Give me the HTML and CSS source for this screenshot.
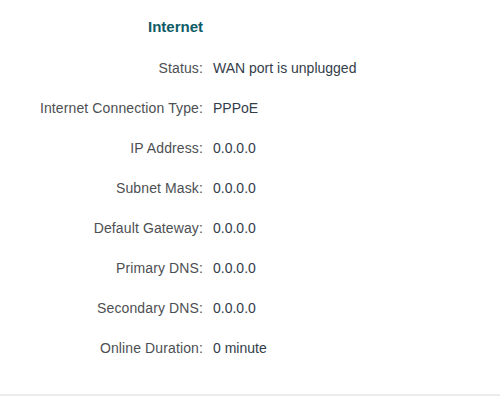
FILE: index.html
```html
<!DOCTYPE html>
<html>
<head>
<meta charset="utf-8">
<link rel="stylesheet" href="styles.css">
</head>
<body>
<div class="panel">
  <div class="title-row">
    <div class="title">Internet</div>
  </div>
  <div class="grid">
    <div class="label">Status:</div><div class="value">WAN port is unplugged</div>
    <div class="label">Internet Connection Type:</div><div class="value">PPPoE</div>
    <div class="label">IP Address:</div><div class="value">0.0.0.0</div>
    <div class="label">Subnet Mask:</div><div class="value">0.0.0.0</div>
    <div class="label">Default Gateway:</div><div class="value">0.0.0.0</div>
    <div class="label">Primary DNS:</div><div class="value">0.0.0.0</div>
    <div class="label">Secondary DNS:</div><div class="value">0.0.0.0</div>
    <div class="label">Online Duration:</div><div class="value">0 minute</div>
  </div>
</div>
<div class="divider"></div>
</body>
</html>
```
FILE: styles.css
```css
html, body {
  margin: 0;
  padding: 0;
  background: #ffffff;
}
body {
  font-family: "Liberation Sans", Arial, sans-serif;
  font-size: 14px;
  width: 500px;
  height: 410px;
}
.panel {
  padding-top: 17px;
  height: 377px;
  box-sizing: border-box;
}
.title-row {
  width: 203px;
  display: flex;
  justify-content: flex-end;
  height: 20px;
  margin-bottom: 11px;
}
.title {
  font-weight: bold;
  font-size: 15px;
  line-height: 20px;
  color: #0f5b66;
}
.grid {
  display: grid;
  grid-template-columns: 203px 1fr;
  column-gap: 10px;
  grid-auto-rows: 40px;
}
.label {
  text-align: right;
  line-height: 40px;
  color: #4d4f53;
  white-space: nowrap;
  letter-spacing: 0.12px;
}
.value {
  line-height: 40px;
  color: #333d4a;
  white-space: nowrap;
}
.divider {
  margin-top: 17px;
  height: 2px;
  background: #ececec;
}
```
